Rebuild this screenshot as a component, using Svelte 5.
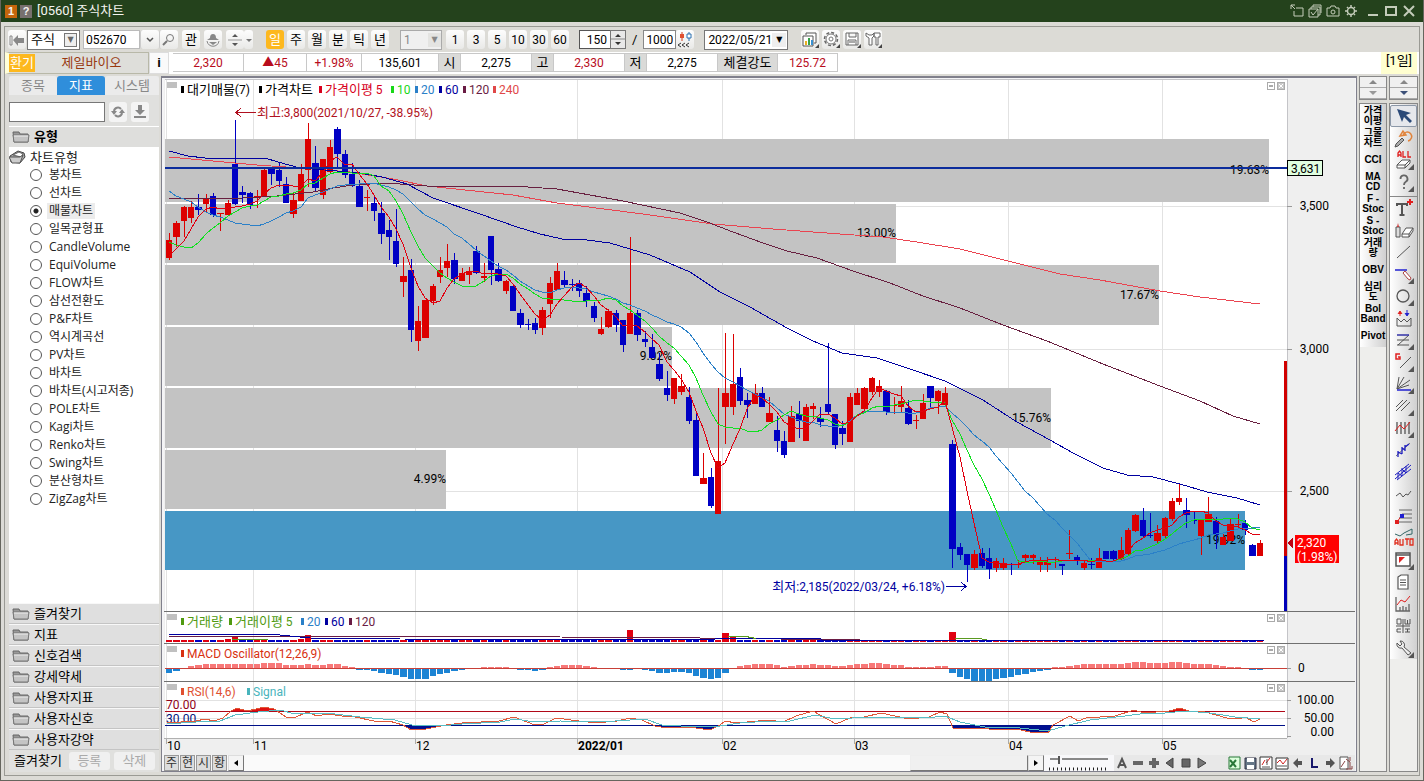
<script>
  const pitch = 7.32;
  const cx = (i) => Math.round(169 + i * pitch);
  // Each body stops one pixel short of the next one.
  const bodyWidth = (i) => cx(i + 1) - cx(i) - 1;

  // high, body top, body bottom, low, rising (1) or falling (0)
  const candles = [
    [233,240,258,260,1],[221,223,237,247,1],[206,207,221,237,1],[201,207,218,223,1],[194,207,210,215,0],
    [194,198,204,213,1],[193,196,215,217,0],[213,213,214,231,1],[200,203,215,215,1],[120,164,204,205,0],
    [186,192,195,203,0],[192,193,205,209,0],[190,196,197,208,1],[169,170,196,197,1],[167,168,174,185,0],
    [162,170,181,187,0],[177,184,203,203,0],[193,200,214,218,1],[164,174,201,201,1],[123,139,170,187,1],
    [146,163,188,191,0],[159,159,195,199,1],[140,147,172,173,1],[127,129,154,168,0],[150,154,175,178,0],
    [163,174,186,187,0],[180,186,207,207,0],[190,197,198,211,1],[197,203,211,221,0],[202,213,234,244,0],
    [220,230,237,260,0],[209,241,264,267,0],[257,276,282,297,1],[259,270,330,342,0],[306,321,341,351,1],
    [300,300,338,338,1],[284,286,301,305,1],[257,270,277,283,1],[244,261,268,277,1],[253,260,279,284,0],
    [268,273,281,281,1],[267,271,275,284,1],[246,251,273,274,0],[263,276,278,282,1],[236,236,270,285,0],
    [263,269,281,282,0],[280,281,291,294,1],[286,286,311,311,0],[309,313,325,328,0],[319,324,325,330,0],
    [318,323,330,334,0],[307,310,328,335,1],[277,283,304,318,1],[263,271,290,290,1],[271,280,285,287,0],
    [279,284,285,291,0],[280,283,291,297,0],[286,293,301,307,0],[302,306,318,322,0],[317,329,334,335,1],
    [309,311,327,328,1],[310,313,325,332,0],[320,320,345,352,0],[237,313,334,334,1],[310,313,335,341,0],
    [331,339,342,347,0],[334,347,358,358,0],[353,364,379,381,0],[371,388,395,401,0],[378,378,399,404,1],
    [374,386,392,395,1],[387,397,421,424,0],[413,420,476,476,0],[453,478,484,484,1],[468,477,506,508,0],
    [388,461,514,514,1],[333,393,407,444,1],[334,384,407,415,1],[368,377,401,405,0],[393,400,405,418,0],
    [384,393,404,404,1],[387,393,407,407,0],[397,413,422,422,1],[416,430,441,452,0],[431,441,455,458,0],
    [406,416,442,442,1],[401,414,421,438,0],[404,407,441,441,1],[403,406,409,419,1],[407,418,422,427,0],
    [343,404,412,415,0],[414,414,445,449,0],[421,428,434,445,0],[393,397,442,442,1],[388,393,405,405,1],
    [387,388,409,411,1],[377,378,392,395,1],[380,386,392,397,1],[390,391,412,415,0],[397,405,406,414,1],
    [386,401,407,412,1],[400,408,424,425,0],[415,420,421,429,1],[394,403,419,419,1],[386,386,398,407,0],
    [390,391,401,414,1],[387,393,405,407,1],[440,444,549,568,0],[543,547,555,560,0],[554,554,565,582,0],
    [550,554,568,570,1],[548,553,566,568,0],[548,558,569,579,0],[558,561,568,572,1],[558,563,568,570,1],
    [563,564,565,575,0],[560,564,565,568,1],[554,555,558,563,1],[554,555,558,564,1],[557,562,565,572,1],
    [557,562,565,572,1],[557,559,560,568,1],[564,564,566,575,0],[530,553,554,559,1],[555,557,561,565,0],
    [560,563,568,570,1],[558,564,565,569,0],[548,558,568,568,1],[551,551,559,559,0],[550,551,559,560,0],
    [537,550,559,561,1],[528,530,554,555,1],[514,515,531,532,1],[508,520,536,537,0],[513,535,536,538,0],
    [525,533,541,543,1],[517,518,536,539,1],[498,501,519,521,1],[484,498,502,505,1],[498,510,515,528,0],
    [512,520,521,524,0],[519,519,536,555,1],[497,514,522,522,1],[517,521,535,549,0],[534,537,545,545,1],
    [519,524,541,541,1],[514,524,525,527,1],[520,523,530,535,0],[544,545,556,556,0],[540,543,556,556,1]
  ];
  const closes = candles.map((c) => (c[4] ? c[1] : c[2]));

  // Moving average of the closes; `lead` covers the candles before the first full window.
  function average(n, lead) {
    return closes
      .map((_, i) => {
        const v = i < n - 1 ? lead[i] : closes.slice(i - n + 1, i + 1).reduce((a, b) => a + b, 0) / n;
        return `${cx(i)},${Math.round(v)}`;
      })
      .join(' ');
  }

  const ma5 = average(5, [256, 249, 241, 229]);
  const ma10 = average(10, [242, 245, 247, 248, 243, 234, 228, 223, 216]);
  const ma20 = average(20, [191, 196, 199, 202, 207, 212, 215, 217, 220, 223, 224, 225, 226, 224, 221, 217, 213, 211, 207]);
  const ma60 = '169,151 188,156 205,158 265,158 278,162 300,168 325,170 360,173 382,177 407,184 433,198 480,214 517,227 540,234 562,239 587,240 610,243 650,255 690,272 720,292 750,307 787,328 813,341 842,353 877,358 910,369 945,381 983,400 1017,422 1050,440 1073,453 1103,468 1127,475 1153,477 1180,484 1207,492 1237,498 1260,505';
  const ma120 = '169,199 243,198 277,196 313,192 333,188 353,185 387,183 427,186 513,186 557,189 623,201 680,213 707,222 733,232 763,243 787,251 817,258 853,271 890,283 923,296 960,308 1003,325 1047,341 1103,364 1160,386 1200,401 1233,416 1260,424';
  const ma240 = '169,157 213,161 257,165 300,168 350,172 393,179 427,186 513,195 557,203 573,205 643,214 713,224 773,229 840,234 883,237 917,242 960,249 1020,264 1060,274 1100,280 1160,291 1200,297 1260,304';

  const bands = [
    [139, 63, 1269, '19.63%', 174], [204, 59, 896, '13.00%', 237], [265, 60, 1159, '17.67%', 299], [327, 59, 672, '9.02%', 360],
    [388, 60, 1051, '15.76%', 422], [450, 59, 446, '4.99%', 483], [511, 59, 1245, '19.92%', 544]
  ];

  const macd = [-4,-2,0,2,3,4,4,4,4,4,4,4,4,5,5,5,3,3,3,4,3,3,4,4,2,1,-1,-1,-2,-4,-5,-6,-8,-10,-10,-10,-7,-5,-4,-2,-1,0,0,1,1,1,1,0,-1,-1,-2,-1,1,2,3,3,3,2,1,0,0,0,-1,-1,0,-1,-2,-4,-4,-3,-3,-4,-7,-9,-10,-9,-4,0,2,3,4,4,4,3,1,2,3,3,4,3,3,2,2,3,4,4,5,5,4,3,3,1,1,1,1,2,2,-4,-8,-10,-12,-12,-12,-10,-9,-8,-6,-5,-3,-2,-1,1,1,2,3,4,4,4,4,4,4,5,6,6,5,5,5,6,6,5,4,4,4,3,2,1,1,0,-1,-1];
  const bigVolume = { 8: 3, 9: 5, 10: 3, 18: 3, 19: 7, 63: 12, 76: 9, 77: 5, 107: 10 };

  const rsi = '167,723 181,722 196,721 205,719 214,721 223,718 231,711 237,708 247,711 256,709 264,707 274,709 286,717 294,718 307,712 317,716 328,714 342,716 355,717 374,721 389,721 403,725 411,730 426,729 446,725 462,723 481,722 499,721 514,717 535,725 544,724 556,718 571,720 596,723 617,721 630,718 642,720 655,726 667,728 689,727 710,730 720,725 725,721 736,723 769,720 783,722 796,716 813,711 836,724 850,718 864,717 881,713 909,719 929,717 940,712 947,714 953,728 989,729 1021,730 1030,732 1048,733 1053,725 1070,716 1078,721 1086,718 1115,716 1134,710 1144,713 1169,711 1180,708 1189,711 1205,712 1227,718 1239,719 1245,717 1254,722 1260,719';
  const signal = '167,724 196,722 220,721 235,715 258,712 280,710 295,714 312,713 335,714 360,717 395,720 412,725 440,726 462,724 500,722 515,719 535,722 560,721 600,722 630,720 645,719 662,725 700,727 720,726 740,723 770,721 790,721 815,715 835,719 870,717 905,717 925,718 945,716 960,722 985,727 1020,728 1048,731 1065,726 1090,720 1125,716 1140,714 1165,713 1185,711 1210,713 1235,717 1260,719';

  const months = [[166, '10'], [253, '11'], [415, '12'], [577, '2022/01'], [722, '02'], [854, '03'], [1008, '04'], [1162, '05']];
  const legends = [
    { y: 94, items: [[181, '#000', '대기매물(7)'], [259, '#000', '가격차트'], [319, '#d8001c', '가격이평 5'], [391, '#18d818', '10'], [415, '#2a80c8', '20'], [439, '#0000a0', '60'], [463, '#6a1c44', '120'], [493, '#e04848', '240']] },
    { y: 626, items: [[181, '#4f9a10', '거래량'], [229, '#4f9a10', '거래이평 5'], [301, '#2a80c8', '20'], [325, '#0000a0', '60'], [349, '#6a1c44', '120']] },
    { y: 658, items: [[181, '#d83010', 'MACD Oscillator(12,26,9)']] },
    { y: 696, items: [[181, '#e05030', 'RSI(14,6)'], [247, '#48b4bc', 'Signal']] }
  ];
  const panes = [82, 614, 646, 684];

  // Splits a label into Hangul and Latin runs, which are set at different sizes.
  const runs = (t) => t.match(/[가-힣]+|[^가-힣]+/g).map((s) => [s, /[가-힣]/.test(s)]);

  const chartTypes = ['봉차트', '선차트', '매물차트', '일목균형표', 'CandleVolume', 'EquiVolume', 'FLOW차트', '삼선전환도', 'P&F차트', '역시계곡선', 'PV차트', '바차트', '바차트(시고저종)', 'POLE차트', 'Kagi차트', 'Renko차트', 'Swing차트', '분산형차트', 'ZigZag차트'];
  let chosen = $state('매물차트');
  const folders = ['즐겨찾기', '지표', '신호검색', '강세약세', '사용자지표', '사용자신호', '사용자강약'];
  const quick = ['가격\n이평', '그물\n차트', 'CCI', 'MA\nCD', 'F -\nStoc', 'S -\nStoc', '거래\n량', 'OBV', '심리\n도', 'Bol\nBand', 'Pivot'];
  const periods = ['일', '주', '월', '분', '틱', '년'];
  const steps = ['1', '3', '5', '10', '30', '60'];
  const quotes = [
    ['2,320', 'v red'], ['▲45', 'v red'], ['+1.98%', 'v red'], ['135,601', 'v'], ['시', 'k'], ['2,275', 'v'], ['고', 'k'],
    ['2,330', 'v red'], ['저', 'k'], ['2,275', 'v'], ['체결강도', 'k'], ['125.72', 'v red']
  ];

  const g = 'stroke="#555" fill="none"';
  const corner = '<path d="M21 15v6h-6z" fill="#555"/>';
  const tools = [
    ['선택', '<path d="M4 4l5 13 2-5 6 6 2-2-6-6 5-2z" fill="#2b4a78"/>'],
    ['되돌리기', '<path d="M10 8a4.500 4.500 0 1 1 5 6M7 9l3-5 3 4z" stroke="#e0843c" stroke-width="1.500" fill="none"/><path d="M3 17l6-6 2 2-6 6-3 1z" fill="#aaa" stroke="#555"/>'],
    ['전체 지우기', '<path d="M5 8V4l1.500-2L8 4v4M5 6h3M10 2v6h3M15 2v6h3" stroke="#e02020" stroke-width="1.300" fill="none"/><path d="M4 16l5-5h8l-5 5zM4 16v3h8v-3M12 19l5-5v-3" stroke="#555" fill="#fff"/>' + corner],
    ['도움말', '<path d="M7.500 8a3.500 3.500 0 1 1 5 3c-1.300.800-1.500 1.500-1.500 3M11 16v2" stroke="#666" stroke-width="1.800" fill="none"/>' + corner],
    ['문자', '<path d="M4 9V7h10v2M9 7v11M6.500 18h5" stroke="#555" stroke-width="2" fill="none"/><path d="M14 5h6M17 2v6" stroke="#e02020" stroke-width="2"/>'],
    ['색', '<path d="M3 8h4v10H3z" stroke="#555" fill="#ddd"/><path d="M4 8l1-4 1 4z" fill="#c33"/><path d="M9 15l4-6h7l-4 6zM9 15v3h7v-3M16 18l4-6V9" stroke="#555" fill="#fff"/>'],
    ['추세선', `<path d="M4 17L17 5" ${g}/>`],
    ['수평선', '<path d="M2 7h12" stroke="#2020d0" stroke-width="1.500"/><path d="M10 10l2-2 6 7-1 2-2-1z" fill="#fff" stroke="#a44"/>' + corner],
    ['원', '<circle cx="10" cy="11" r="6" stroke="#555" stroke-width="1.300" fill="none"/>' + corner],
    ['파동', `<path d="M4 19v-8l4 4 3-3 3 3 4-4v8M4 19h14" ${g}/><path d="M7 9V5M5 7l2-3 2 3" stroke="#e02020" fill="#e02020"/><path d="M14 3v5M12 6l2 3 2-3" stroke="#2020d0" fill="#2020d0"/>`],
    ['지그재그', '<path d="M4 6h12M4 16h12M16 6L5 16M4 11h12" stroke="#555" fill="none"/><path d="M4 6h12" stroke="#2020d0"/>' + corner],
    ['간선', '<path d="M7 3H3v5h4V6H5" stroke="#e02020" stroke-width="1.500" fill="none"/><path d="M7 17L18 6" stroke="#555"/>' + corner],
    ['부채꼴', '<path d="M4 16L6 4M4 16l7-12M4 16L17 7M4 16l12-4" stroke="#555"/><path d="M4 17h14" stroke="#2020d0" stroke-width="1.500"/>' + corner],
    ['평행선', `<path d="M3 12l7-7M6 13l8-8M8 16l9-9M3 16l4-4" ${g}/>` + corner],
    ['시간대', '<path d="M4 5v12M8 5v12M12 5v12M16 5v12" stroke="#555" stroke-width="1.300"/><path d="M2 14l5-6 4 4 6-7" stroke="#e02020" fill="none"/>' + corner],
    ['회귀선', '<path d="M3 17L17 4" stroke="#777"/><path d="M5 18v-6M9 15V8M12 12V6M5 13l4 2M9 9l3 2M12 8l4-3" stroke="#2020c0" stroke-width="1.300"/>'],
    ['회귀채널', '<path d="M2 14L16 3M4 19L18 8" stroke="#2020c0"/><path d="M5 18v-6M9 15V7M13 12V5M5 12l4 3M9 8l4 4M2 18L18 4" stroke="#2020c0"/>'],
    ['꺾은선', `<path d="M3 13l4-3 3 4 3-3 2 1 3-4" ${g}/>`],
    ['되돌림', '<path d="M6 5h13M9 9h10M6 13h13M4 17h15" stroke="#666"/><path d="M4 17l5-7" stroke="#e02020"/><path d="M2 15h4v4H2z" fill="#e02020"/><path d="M7 9h4v4H7z" fill="#2020d0"/>'],
    ['자동', '<path d="M2 7l5 2 4-3 8-4v5l-6 1" stroke="#366" fill="none"/><path d="M2 18v-4l1.500-2L5 14v4M2 16h3M7 12v6h3v-6M12 12h4M14 12v6M17 12h3v6h-3z" stroke="#e03020" stroke-width="1.300" fill="none"/>'],
    ['창', '<path d="M3 4h14v13H3zM3 6h14" stroke="#555" stroke-width="1.500" fill="#fff"/><path d="M6 8h6l-6 6z" fill="#e02020"/>' + corner],
    ['문서', '<path d="M5 6l3-2h7v14H5zM7 9h6M7 11.500h6M7 14h6" stroke="#555" stroke-width="1.200" fill="#fff"/>'],
    ['통계', '<path d="M3 4v14h14M7 18v-4M10 18v-5M13 18v-4M16 18v-7" stroke="#666" stroke-width="1.300" fill="none"/><path d="M4 12l4-5 4 2 5-6" stroke="#e02020" fill="none"/>'],
    ['일주월년', `<path d="M10 4v14M3 11h14M4 4v5h4V4zM12 4v5h5V4M14.500 5v4M4 14h4M4 17h4M4 14v3M12 14h5M12 17h5M14.500 14v3" ${g}/>`],
    ['설정', '<path d="M4 6a4 4 0 0 0 5 5l6 7 3-2-7-6a4 4 0 0 0-4-6l2 3-2 2z" stroke="#555" fill="#eee"/>' + corner]
  ];
</script>

{#snippet folder(open)}
  <svg class="folder" width="18" height="14" viewBox="0 0 18 14" aria-hidden="true">
    {#if open}
      <path d="M1 6l8-5 6 2 1 4-5 6-9-1z" fill="#aaa" stroke="#444" />
      <path d="M4 5l6-3 4 2-2 3z" fill="#fff" stroke="#666" />
      <path d="M0 7h11l3-2-3 8H3z" fill="#ccc" stroke="#555" />
    {:else}
      <path d="M1 2h6l1 2h8v8H2z" fill="#999" stroke="#666" />
      <path d="M1 5h16l-1 7H2z" fill="#c4c4c4" stroke="#777" />
      <path d="M2 6h14" stroke="#eee" />
    {/if}
  </svg>
{/snippet}

{#snippet mixed(t)}{#each runs(t) as [s, hangul]}<tspan class:hangul>{s}</tspan>{/each}{/snippet}

<div class="app">
  <header class="title">
    <span class="badge one">1</span><span class="badge">?</span>
    <h1>[0560] 주식차트</h1>
    <div class="win">
      <button aria-label="이동"><svg width="14" height="14"><path d="M1 1l4 4M1 5V1h4M6 4h7v8H4V7" /></svg></button>
      <button aria-label="복사"><svg width="14" height="14"><path d="M1 5h9v8H1zM3 5V3h9v8h-2M5 3V1h8v8M3 8l2 3 5-6" /></svg></button>
      <button aria-label="캡처"><svg width="14" height="14"><path d="M1 4h3l1-2h4l1 2h3v8H1z" /><circle cx="7" cy="8" r="2" /></svg></button>
      <button aria-label="설정"><svg width="14" height="14"><circle cx="7" cy="7" r="3.500" stroke-width="1.500" /><path d="M7 1v2M7 11v2M1 7h2M11 7h2M3 3l1 1M10 10l1 1M3 11l1-1M10 4l1-1" stroke-width="1.500" /></svg></button>
      <button class="wide" aria-label="최소화"><svg width="14" height="14"><path d="M2 11h10" stroke-width="2" /></svg></button>
      <button class="wide" aria-label="최대화"><svg width="14" height="14"><path d="M2 3h10v8H2z" stroke-width="2" /></svg></button>
      <button class="wide" aria-label="닫기"><svg width="14" height="14"><path d="M2 2l10 10M12 2L2 12" stroke-width="2" /></svg></button>
    </div>
  </header>

  <div class="frame">
    <div class="toolbar">
      <button class="tb" aria-label="처음"><svg width="16" height="14"><path d="M1 3h2v9H1z" fill="none" stroke="#888" /><path d="M4 7l5-5v3h6v5H9v3z" fill="#888" /></svg></button>
      <span class="drop kind"><select aria-label="종류"><option>주식</option></select><i class="boxed">▼</i></span>
      <input class="code" aria-label="종목코드" value="052670" />
      <button class="tb seg" aria-label="목록"><svg width="12" height="12"><path d="M3 4l3 3 3-3" stroke="#555" stroke-width="1.500" fill="none" /></svg></button>
      <button class="tb seg" aria-label="검색"><svg width="14" height="14"><circle cx="8" cy="5" r="3.500" fill="none" stroke="#777" /><path d="M5 8l-4 4" stroke="#777" stroke-width="2" /></svg></button>
      <button class="tb gap">관</button>
      <button class="tb gap" aria-label="사용자"><svg width="16" height="16"><path d="M5 6a3 4 0 0 1 6 0l3 2H2z" fill="#888" /><path d="M2 9c1 7 11 7 12 0" fill="none" stroke="#888" /><path d="M4 10h8l-4 3z" fill="#888" /></svg></button>
      <button class="tb gap" aria-label="증감"><svg width="16" height="16"><path d="M5 5h6L8 2zM5 11h6l-3 3z" fill="#555" /><path d="M1 8h14" stroke="#999" /></svg></button>
      <button class="tb thin" aria-label="더보기"><svg width="8" height="8"><path d="M1 3h6L4 6z" fill="#777" /></svg></button>
      <div class="group periods">
        {#each periods as p, i}<button class="tb" class:on={i === 0}>{p}</button>{/each}
      </div>
      <span class="drop unit"><select class="num" aria-label="단위" disabled><option>1</option></select><i>▼</i></span>
      <div class="group">
        {#each steps as s}<button class="tb num">{s}</button>{/each}
      </div>
      <input class="count" aria-label="표시 개수" value="150" />
      <button class="updown" aria-label="개수 증감"><svg width="15" height="17"><path d="M0 8h15" stroke="#888" /><path d="M4 6h6L7 3zM4 11h6l-3 3z" fill="#333" /></svg></button>
      <span class="slash">/</span>
      <input class="total" aria-label="전체 개수" value="1000" />
      <button class="tb" aria-label="봉 크기"><svg width="16" height="16"><path d="M5 0v9" stroke="#d04020" /><path d="M3 2h4v4H3z" fill="#e05030" /><path d="M12 0v9" stroke="#2a70b0" /><path d="M10 2h4v4h-4z" fill="#fff" stroke="#2a70b0" /><path d="M4 11l-3 2 3 2M8 11l-3 2 3 2M12 11l-3 2 3 2" stroke="#333" fill="none" /></svg></button>
      <span class="drop date"><select class="num" aria-label="날짜"><option>2022/05/21</option></select><i>▼</i></span>
      <div class="group big">
        <button class="tb" aria-label="차트 비교"><svg width="17" height="17"><path d="M4 4V2h10v10h-2M1 5h10v10H1z" fill="#fff" stroke="#555" /><path d="M3 14v-4h2v4z" fill="#e8b020" /><path d="M6 14V7h2v7z" fill="#38a048" /><path d="M9 14v-5h2v5z" fill="#3890d0" /><path d="M17 13v4h-4z" fill="#444" /></svg></button>
        <button class="tb" aria-label="환경설정"><svg width="17" height="17"><circle cx="8" cy="8" r="6.500" fill="none" stroke="#666" stroke-width="1.500" stroke-dasharray="3 2" /><circle cx="8" cy="8" r="5" fill="#fff" stroke="#777" /><circle cx="8" cy="8" r="2" fill="none" stroke="#777" /><path d="M17 13v4h-4z" fill="#444" /></svg></button>
        <button class="tb" aria-label="저장"><svg width="17" height="17"><path d="M2 2h12v12H2zM5 2v4h7V2M4 14V9h8v5" fill="#fff" stroke="#666" /><path d="M5 11h6" stroke="#555" /><path d="M17 13v4h-4z" fill="#444" /></svg></button>
        <button class="tb" aria-label="도구"><svg width="17" height="17"><path d="M1 2v3l3 2v7h3V7l2-2V2L7 4H4zM9 2h6v4h-2v8h-2V6H9z" fill="#fff" stroke="#666" /><path d="M17 13v4h-4z" fill="#444" /></svg></button>
      </div>
    </div>

    <div class="info">
      <button class="stock"><b>환기</b><span>제일바이오</span></button>
      <button class="about" aria-label="종목정보">i</button>
      <div class="quotes">
        {#each quotes as [text, kind]}<span class={kind}>{text}</span>{/each}
      </div>
      <span class="unitday">[1일]</span>
    </div>

    <main>
      <aside class="side">
        <nav class="tabs">
          <button>종목</button><button class="on">지표</button><button>시스템</button>
        </nav>
        <div class="find">
          <input aria-label="지표 검색" />
          <button aria-label="새로고침"><svg width="14" height="14"><path d="M3 6a4 4 0 0 1 7-2M11 8a4 4 0 0 1-7 2" stroke="#888" stroke-width="2" fill="none" /><path d="M0 6h6L3 10zM8 8h6l-3-4z" fill="#888" /></svg></button>
          <button aria-label="내려받기"><svg width="14" height="14"><path d="M5 0h4v5h3l-5 5-5-5h3z" fill="#888" /><path d="M1 12h12" stroke="#888" stroke-width="2" /></svg></button>
        </div>
        <h2>{@render folder(false)}유형</h2>
        <div class="tree">
          <p>{@render folder(true)}차트유형</p>
          {#each chartTypes as t}
            <label class:sel={chosen === t}><input type="radio" name="type" value={t} bind:group={chosen} /><span>{t}</span></label>
          {/each}
        </div>
        {#each folders as f}
          <button class="fold">{@render folder(false)}{f}</button>
        {/each}
        <div class="foot"><span>즐겨찾기</span><button disabled>등록</button><button disabled>삭제</button></div>
      </aside>

      <section class="chart">
        <svg class="plot" viewBox="164 79 1191 676" preserveAspectRatio="xMinYMin meet" shape-rendering="crispEdges" role="img" aria-label="주식차트">
          <rect x="164" y="79" width="1191" height="676" fill="#efefef" />
          <rect x="165" y="79" width="1122" height="659" fill="#fff" />
          <path d="M165 79.500H1287M1287.500 79V738" stroke="#c4c4c8" />
          <g stroke="#e2e2e2">
            {#each months as [x]}<path d="M{x + 0.5} 80V738" />{/each}
            <path d="M165 206.500H1287M165 349.500H1287M165 491.500H1287M165 700.500H1287M165 718.500H1287" />
          </g>
          {#each bands as [y, h, x], i}
            <rect x="165" {y} width={x - 165} height={h} fill={i === 6 ? '#4797c5' : '#c3c3c3'} />
          {/each}
          <path d="M1287 206.500h5M1287 349.500h5M1287 491.500h5M1287 668.500h4M1287 700.500h4M1287 718.500h4M1287 736.500h4" stroke="#999" />
          {#each months as [x]}<path d="M{x + 0.5} 738v6" stroke="#aaa" />{/each}

          {#each bands as [, , x, t, y]}<text {x} {y} text-anchor="end">{t}</text>{/each}
          {#each candles as [h, t, b, l, up], i}
            <g fill={up ? '#dc0000' : '#0000c4'}>
              <rect x={cx(i)} y={h} width="1" height={l - h} />
              <rect x={cx(i) - 3} y={t} width={bodyWidth(i)} height={Math.max(b - t, 1)} />
            </g>
          {/each}
          <g fill="none">
            <polyline points={ma240} stroke="#ea4450" />
            <polyline points={ma120} stroke="#682040" />
            <polyline points={ma60} stroke="#0000a0" />
            <polyline points={ma20} stroke="#2a80c8" />
            <polyline points={ma10} stroke="#10e020" />
            <polyline points={ma5} stroke="#e00010" />
          </g>
          <rect x="165" y="167" width="1122" height="2" fill="#0c2c9c" />
          <rect x="1284" y="361" width="3" height="195" fill="#d00000" />
          <rect x="1284" y="556" width="3" height="55" fill="#0000b8" />

          <path d="M236 112.500h20M241 108l-5 4.500 5 4.500" fill="none" stroke="#b01020" />
          <text x="257" y="117" fill="#b01020">{@render mixed('최고:3,800(2021/10/27, -38.95%)')}</text>
          <path d="M946 586.500h20M961 582l5 4.500-5 4.500" fill="none" stroke="#0000a0" />
          <text x="945" y="591" text-anchor="end" fill="#0000a0">{@render mixed('최저:2,185(2022/03/24, +6.18%)')}</text>

          <g text-anchor="end">
            <text x="1329" y="210">3,500</text>
            <text x="1329" y="353">3,000</text>
            <text x="1329" y="495">2,500</text>
            <text x="1334" y="704">100.00</text>
            <text x="1334" y="722">50.00</text>
            <text x="1334" y="736">0.00</text>
          </g>
          <text x="1298" y="672">0</text>
          <rect x="1287.500" y="160.500" width="35" height="15" fill="#e0ffe0" stroke="#000" />
          <text x="1291" y="173">3,631</text>
          <rect x="1295" y="535" width="44" height="28" fill="#ff0000" />
          <path d="M1287 543l6-5v11z" fill="#c00010" />
          <text x="1297" y="547" fill="#fff">2,320</text>
          <text x="1297" y="561" fill="#fff">(1.98%)</text>

          {#each candles as c, i}
            <rect x={cx(i) - 3} y={642 - (bigVolume[i] ?? 2)} width={bodyWidth(i)} height={bigVolume[i] ?? 2} fill={c[4] || i === 9 || i === 107 ? '#e00010' : '#0000c4'} />
          {/each}
          <g fill="none">
            <polyline points="169,636 540,636 560,637 700,638 860,640 1264,640" stroke="#6a1c44" />
            <polyline points="169,634 270,634 310,638 400,639 700,640 730,638 820,638 822,640 1264,640" stroke="#0000a0" />
            <path d="M232 639.500h36M728 636.500h18l10 2M955 638.500h22l10 1" stroke="#5a9a20" />
          </g>

          {#each macd as m, i}
            <rect x={cx(i) - 3} y={m > 0 ? 668 - m : 669} width={bodyWidth(i)} height={Math.abs(m)} fill={m > 0 ? '#f87878' : '#1c84d4'} />
          {/each}
          <path d="M165 668.500H1287" stroke="#c84038" />

          <clipPath id="over"><rect x="165" y="700" width="1122" height="11" /></clipPath>
          <clipPath id="under"><rect x="165" y="725" width="1122" height="13" /></clipPath>
          <polygon points="167,711 {rsi} 1260,711" fill="#e01010" clip-path="url(#over)" />
          <polygon points="167,725 {rsi} 1260,725" fill="#001090" clip-path="url(#under)" />
          <text x="166" y="709" fill="#900018">70.00</text>
          <text x="166" y="723" fill="#001078">30.00</text>
          <path d="M165 711.500H1285" stroke="#b00818" />
          <path d="M165 725.500H1285" stroke="#001088" />
          <polyline points={rsi} fill="none" stroke="#e05838" />
          <polyline points={signal} fill="none" stroke="#58bcc4" />

          <path d="M164 611.500H1355M164 643.500H1355M164 681.500H1355" stroke="#707070" />
          <path d="M164 738.500H1287" stroke="#b0b0b0" />
          {#each months as [x, t]}<text x={x + 1} y="750" class:bold={t.length > 2}>{t}</text>{/each}

          {#each panes as y}
            <rect x="167" {y} width="10" height="6" fill="#c0c0c0" />
            <g fill="none" stroke="#aaa">
              <rect x="1267.500" y={y + 0.5} width="7" height="7" />
              <path d="M1269 {y + 4}h4" stroke-width="2" />
              <rect x="1277.500" y={y + 0.5} width="7" height="7" fill="#c8c8c8" />
              <path d="M1279 {y + 2}l4 4M1283 {y + 2}l-4 4" stroke="#fff" />
            </g>
          {/each}
          {#each legends as { y, items }}
            {#each items as [x, c, t]}
              <rect {x} y={y - 8} width="3" height="7" fill={c} />
              <text x={x + 6} {y} fill={c}>{@render mixed(t)}</text>
            {/each}
          {/each}
        </svg>

        <div class="bottom">
          {#each ['주', '현', '시', '황'] as b}<button class="mode">{b}</button>{/each}
          <button class="arrow" aria-label="왼쪽"><svg width="6" height="8"><path d="M5 1v6L1 4z" /></svg></button>
          <div class="track"><span class="thumb"></span></div>
          <button class="arrow" aria-label="오른쪽"><svg width="6" height="8"><path d="M1 1v6l4-3z" /></svg></button>
          <svg class="range" width="62" height="16"><path d="M2 4h8M14 4h46" stroke="#888" stroke-width="2" /><path d="M11 1v8" stroke="#555" stroke-width="2" /><path d="M1 14h60" stroke="#222" stroke-width="3" stroke-dasharray="1 3" /></svg>
          <div class="icons">
            <button aria-label="글자"><svg width="16" height="16"><path d="M4 13L8 4l4 9M6 10h4" fill="none" stroke="#555" stroke-width="2" /></svg></button>
            <button aria-label="축소"><svg width="16" height="16"><path d="M3 6h10v4H3z" fill="#666" /></svg></button>
            <button aria-label="확대"><svg width="16" height="16"><path d="M3 6h3V3h4v3h3v4h-3v3H6v-3H3z" fill="#666" /></svg></button>
            <button aria-label="이전"><svg width="16" height="16"><path d="M11 3v10L4 8z" fill="#666" stroke="#444" /></svg></button>
            <button aria-label="정지"><svg width="16" height="16"><path d="M4 4h8v8H4z" fill="#666" stroke="#444" /></svg></button>
            <button aria-label="다음"><svg width="16" height="16"><path d="M4 3v10l8-5z" fill="#777" stroke="#444" /></svg></button>
          </div>
          <div class="icons">
            <button aria-label="엑셀"><svg width="16" height="16"><path d="M3 2h11v12H3z" fill="#dfd" stroke="#287838" /><path d="M4 5l6 7M10 5l-6 7" stroke="#287838" stroke-width="2" /></svg></button>
            <button aria-label="저장"><svg width="16" height="16"><path d="M3 3h11v11H3z" fill="#678" stroke="#334" /><path d="M5 3h7v4H5zM5 10h7v4H5z" fill="#fff" /></svg></button>
            <button aria-label="차트 창"><svg width="16" height="16"><path d="M2 2h12v12H2z" fill="#fff" stroke="#333" /><path d="M4 10l3-5M8 8l4-5" stroke="#d02020" /><path d="M4 12h8M9 4v6" stroke="#555" /></svg></button>
            <button aria-label="차트"><svg width="16" height="16"><path d="M2 3h12v11H2z" fill="#fff" stroke="#333" /><path d="M3 8l3-3 3 4 4-5" stroke="#d02020" fill="none" /><path d="M3 11h10" stroke="#555" /></svg></button>
            <button aria-label="뒤로"><svg width="16" height="16"><path d="M3 8l5-5v3h4v4H8v3z" fill="#555" /></svg></button>
            <button aria-label="로그"><svg width="16" height="16"><path d="M6 3v9h6" fill="none" stroke="#18186c" stroke-width="2" /></svg></button>
            <button aria-label="앞으로"><svg width="16" height="16"><path d="M13 8L8 3v3H4v4h4v3z" fill="#555" /></svg></button>
            <button aria-label="도구"><svg width="16" height="16"><path d="M2 2h8v12H2z" fill="#fff" stroke="#555" /><path d="M3 12l4-6M8 4l4 3v7M12 2v4M8 14h6v-3" stroke="#844" fill="none" /></svg></button>
          </div>
        </div>
      </section>

      {#each [0, 1] as col}
        <div class="strip">
          <div class="scroll">
            <button aria-label="위로"><svg width="12" height="6"><path d="M2 5h8L6 1z" fill="#888" /></svg></button>
            <button aria-label="아래로"><svg width="12" height="6"><path d="M2 1h8L6 5z" fill={col ? '#3c5078' : '#999'} /></svg></button>
          </div>
          <div class="list">
            {#if col === 0}
              <div class="shade">{#each quick as q}<button class="quick">{q}</button>{/each}</div>
            {:else}
              <div class="shade">
                {#each tools as [name, body], i}
                  <button class="tool" class:picked={i === 0} class:rule={i === 3} aria-label={name}><svg width="22" height="22" viewBox="0 0 22 22">{@html body}</svg></button>
                {/each}
              </div>
            {/if}
          </div>
        </div>
      {/each}
    </main>
  </div>
</div>

<style>
  :global(body) { margin: 0; }
  .app { box-sizing: border-box; min-height: 100vh; display: flex; flex-direction: column; background: #dcdbd6; border: 1px solid #66665e; border-top: 0; font: 13px/16px Roboto, 'Noto Sans CJK KR', sans-serif; color: #000; }
  .app :is(button, input, select) { box-sizing: border-box; margin: 0; padding: 0; font: inherit; color: inherit; border: 0; background: none; border-radius: 0; }
  .app button { display: inline-flex; align-items: center; justify-content: center; }
  .app .num { font-size: 12px; }
  svg { display: block; flex: none; }

  .title { height: 22px; flex: none; display: flex; align-items: center; padding: 0 7px 0 4px; background: #24421c; color: #f4f4f0; }
  .title h1 { margin: 0 auto 0 2px; font: inherit; }
  .badge { width: 12px; height: 13px; margin-right: 3px; background: #77706e; font: bold 11px/13px 'Liberation Sans', sans-serif; text-align: center; }
  .badge.one { background: #c4660c; }
  .win { display: flex; gap: 4px; }
  .win .wide { margin-left: 4px; }
  .win .wide + .wide { margin-left: 0; }
  .win svg { fill: none; stroke: #c4ccba; }

  .frame { flex: 1; display: flex; flex-direction: column; margin: 4px 3px; border: 1px solid #9a9a94; }
  .toolbar { height: 25px; display: flex; align-items: center; padding-left: 3px; }
  .tb { min-width: 18px; height: 19px; flex: none; background: linear-gradient(#fdfdfd, #e9e9e7) !important; border-radius: 3px !important; }
  .tb.on { background: #fdb81e !important; color: #fff !important; }
  .tb.gap { margin-left: 4px; }
  .tb.seg { width: 19px; border-left: 1px solid #ccc !important; }
  .tb.thin { min-width: 9px; width: 9px; }
  .group { display: flex; gap: 3px; }
  .group.periods { margin-left: 13px; }
  .group.big { margin-left: 13px; }
  .drop { position: relative; display: inline-flex; height: 20px; background: #fff; border: 1px solid #777; box-sizing: border-box; }
  .drop select { width: 100%; appearance: none; padding-left: 3px !important; opacity: 1; }
  .drop i { position: absolute; right: 2px; top: 2px; width: 13px; height: 14px; font: 8px/14px 'DejaVu Sans', sans-serif; text-align: center; pointer-events: none; background: #eee; }
  .drop .boxed { box-sizing: border-box; border: 1px solid #777; line-height: 12px; color: #666; }
  .kind { width: 53px; margin: 0 3px 0 1px; }
  .unit { width: 42px; margin: 0 4px 0 11px; border-color: #aaa; color: #888; background: #f0f0f0; }
  .unit i { background: #e4e4e2; right: 0; }
  .date { width: 84px; margin-left: 10px; }
  .date i { right: 1px; width: 14px; }
  .toolbar input { height: 19px; background: #fff; border: 1px solid #888; padding: 0 3px; font-size: 12px; }
  .toolbar .code { width: 57px; border-color: #bbb; padding-left: 2px; }
  .toolbar .count { width: 31px; margin-left: 10px; text-align: right; border-width: 1px 0 1px 1px; border-color: #555; }
  .updown { height: 19px; background: #e8e8e8 !important; border: 1px solid #777 !important; width: 16px; }
  .slash { margin: 0 6px; }
  .toolbar .total { width: 33px; padding: 0 2px; }

  .info { height: 22px; display: flex; background: #fff; }
  .info .stock { width: 144px; border: 1px solid #b8b8a8; border-left: 4px solid #ffffd8; background: #dededa; color: #983810; justify-content: flex-start; }
  .stock b { font-weight: normal; background: #fdb81e; color: #fff; line-height: 18px; padding: 0 1px; }
  .stock span { flex: 1; text-align: center; }
  .info .about { width: 20px; font: bold 13px/20px 'Liberation Sans', sans-serif; border: 1px solid #ddd; background: #fafafa; margin-right: 4px; }
  .quotes { display: grid; grid-template-columns: 71px 63px 55px 77px 22px 71px 22px 71px 22px 71px 60px 60px; margin: 1px 0 2px; border: solid #c8c8c8; border-width: 1px 0; }
  .quotes span { text-align: center; line-height: 18px; border-right: 1px solid #c8c8c8; white-space: nowrap; overflow: hidden; }
  .quotes .v { font-size: 12px; }
  .quotes .k { background: #dadad8; }
  .quotes .red { color: #b80c1c; }
  .unitday { margin-left: auto; width: 36px; margin-right: 2px; background: #ffffd0; text-align: center; line-height: 18px; }

  main { flex: 1; display: grid; grid-template-columns: 150px minmax(0, 1fr) 28px 29px; column-gap: 2px; padding: 2px 1px 3px 4px; }
  .side { display: flex; flex-direction: column; background: #e0e0de; }
  .side > * { flex: none; }
  .tabs { display: grid; grid-template-columns: 48px 48px 1fr; height: 19px; }
  .app .tabs button { background: #ebebeb; color: #888; border-radius: 3px 3px 0 0; }
  .app .tabs .on { background: #2f8edb; color: #fff; }
  .find { display: flex; gap: 4px; padding: 7px 0 4px; }
  .app .find input { width: 96px; height: 20px; background: #fff; border: 1px solid #777; }
  .app .find button { width: 18px; background: #f4f4f4; border-radius: 3px; }
  h2 { margin: 0; height: 21px; display: flex; align-items: center; font-size: 13px; font-weight: bold; background: #dededc; border-top: 1px solid #fff; box-sizing: border-box; }
  .folder { margin: 0 4px 0 3px; }
  .side .tree { flex: 1; padding-top: 1px; background: #fff; font-family: 'Open Sans', 'Noto Sans CJK KR', sans-serif; font-size: 12px; color: #222; }
  .tree p { margin: 0; height: 18px; display: flex; align-items: center; font-size: 13px; }
  .tree p .folder { margin-left: 0; margin-right: 3px; }
  .tree label { height: 18px; display: flex; align-items: center; padding-left: 21px; gap: 5px; white-space: nowrap; }
  .tree label span { padding: 0 2px; line-height: 16px; }
  .tree .sel span { background: #ececec; }
  .app .tree input { appearance: none; width: 12px; height: 12px; border: 1px solid #555; border-radius: 50%; background: #fff; }
  .app .tree input:checked { background: radial-gradient(circle, #222 2px, #fff 3px); }
  .app .fold { height: 21px; justify-content: flex-start; background: #dfdfdf; border-top: 1px solid #f8f8f8; border-bottom: 1px solid #c4c4c4; }
  .foot { height: 22px; display: flex; align-items: center; gap: 4px; padding-left: 5px; }
  .foot span { margin-right: 3px; }
  .app .foot button { width: 41px; height: 18px; background: #f0f0f0; color: #aaa; border-radius: 3px; }

  .chart { border: 1px solid #80808c; border-top-width: 2px; background: #f4f4f6; padding: 1px 1px 0 2px; display: flex; flex-direction: column; min-width: 0; }
  .plot { width: 100%; height: auto; }
  .plot text { font: 12px Roboto, 'Noto Sans CJK KR', sans-serif; white-space: pre; }
  .plot .hangul { font-size: 13px; }
  .plot .bold { font-weight: bold; }
  .bottom { display: flex; align-items: center; height: 16px; background: #f8f8fa; overflow: hidden; }
  .app .mode { width: 15px; height: 16px; margin-right: 1px; background: #ddd; border: 1px solid #999; font-size: 12px; color: #333; }
  .app .arrow { width: 16px; height: 16px; background: #f4f4f4; border: 1px solid; border-color: #ddd #777 #777 #ddd; }
  .track { flex: 1; height: 16px; display: flex; justify-content: flex-end; background: #fafafa; }
  .thumb { width: 15%; box-sizing: border-box; background: #f0f0f0; border: 1px solid; border-color: #eee #777 #777 #eee; }
  .range { margin: 0 4px; }
  .icons { display: flex; background: #e8e8e8; padding-right: 1px; }
  .icons + .icons { padding-left: 15px; }

  .strip { display: flex; flex-direction: column; gap: 3px; }
  .scroll { height: 24px; display: grid; grid-template-rows: 1fr 1fr; border: 1px solid #888; box-sizing: border-box; }
  .app .scroll button { background: #f0f0f0; border-bottom: 1px solid #aaa; }
  .list { flex: 1; border: 1px solid #888; background: #eeeeec; }
  .shade { display: flex; flex-direction: column; padding-top: 1px; background: linear-gradient(90deg, #fff, #d0d0d0); }
  .app .quick { height: 22px; font: bold 10px/10px 'Liberation Sans', 'Noto Sans CJK KR', sans-serif; white-space: pre; }
  .app .tool { height: 22px; }
  .app .tool.picked { background: #e6e8ec; border: 1px solid #8c98a8; border-radius: 2px; }
  .app .tool.rule { height: 26px; border-bottom: 1px solid #888; padding-bottom: 3px; }
</style>
